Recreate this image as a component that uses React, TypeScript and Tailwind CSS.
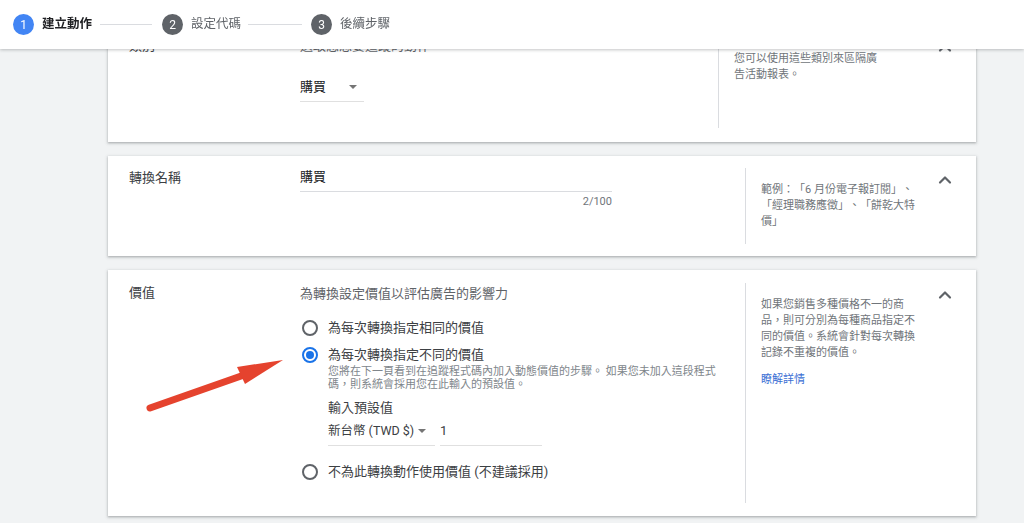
import React from "react";
import { ChevronUp } from "lucide-react";

function StepCircle({ n, active }: { n: number; active?: boolean }) {
  return (
    <div
      className={
        "flex h-[21px] w-[21px] shrink-0 items-center justify-center rounded-full text-[12px] leading-none text-white " +
        (active ? "bg-[#4285f4]" : "bg-[#5f6368]")
      }
    >
      {n}
    </div>
  );
}

function Radio({ checked }: { checked?: boolean }) {
  return (
    <div
      className={
        "flex h-4 w-4 shrink-0 items-center justify-center rounded-full border-2 " +
        (checked ? "border-[#1a73e8]" : "border-[#5f6368]")
      }
    >
      {checked && <div className="h-2 w-2 rounded-full bg-[#1a73e8]" />}
    </div>
  );
}

function Caret() {
  return (
    <svg width="8" height="4" viewBox="0 0 8 4" className="shrink-0">
      <path d="M0 0 L8 0 L4 4 Z" fill="#757575" />
    </svg>
  );
}

function Collapse() {
  return (
    <div className="ml-auto mr-[21px] mt-[2px] shrink-0">
      <ChevronUp size={20} strokeWidth={2.6} color="#5f6368" />
    </div>
  );
}

export default function App() {
  return (
    <div className="relative min-h-[523px] bg-[#f1f3f4] font-['Roboto','Noto_Sans_CJK_TC',sans-serif] text-[#202124] [text-spacing-trim:space-all]">
      {/* step header pinned over the scrolled form */}
      <header className="fixed inset-x-0 top-0 z-10 flex h-[49px] items-center bg-white pl-[13px] shadow-[0_1px_3px_rgba(60,64,67,0.3)]">
        <StepCircle n={1} active />
        <span className="ml-[8px] text-[12.5px] font-bold text-[#202124]">建立動作</span>
        <div className="ml-[8px] mr-[10px] h-px w-[52px] bg-[#dadce0]" />
        <StepCircle n={2} />
        <span className="ml-[8px] text-[12.5px] text-[#5f6368]">設定代碼</span>
        <div className="ml-[7px] mr-[9px] h-px w-[54px] bg-[#dadce0]" />
        <StepCircle n={3} />
        <span className="ml-[8px] text-[12.5px] text-[#5f6368]">後續步驟</span>
      </header>

      <main className="ml-[108px] flex w-[868px] flex-col gap-[14px] pt-[24px] pb-[20px]">
        {/* category */}
        <section className="flex bg-white shadow-[0_1px_2px_rgba(60,64,67,0.3),0_1px_3px_1px_rgba(60,64,67,0.12)]">
          <div className="w-[192px] shrink-0 pl-[21px] pt-[12px] text-[13px] leading-[20px] text-[#3c4043]">類別</div>
          <div className="w-[418px] shrink-0 pt-[12px] pb-[40px]">
            <div className="text-[13px] leading-[20px] text-[#5f6368]">選取您想要追蹤的動作</div>
            <div className="mt-[21px] flex w-[64px] items-center justify-between border-b border-[#e0e0e0] pb-[4px] pr-[7px]">
              <span className="text-[13px] leading-[20px]">購買</span>
              <Caret />
            </div>
          </div>
          <div className="mt-[12px] mb-[14px] flex flex-1 border-l border-[#dadce0] pl-[15px]">
            <div className="w-[150px] pt-[15px] text-[11px] leading-[16px] whitespace-nowrap text-[#70757a]">
              您可以使用這些類別來區隔廣
              <br />
              告活動報表。
            </div>
            <Collapse />
          </div>
        </section>

        {/* conversion name */}
        <section className="flex bg-white shadow-[0_1px_2px_rgba(60,64,67,0.3),0_1px_3px_1px_rgba(60,64,67,0.12)]">
          <div className="w-[192px] shrink-0 pl-[21px] pt-[12px] text-[13px] leading-[20px] text-[#3c4043]">轉換名稱</div>
          <div className="w-[445px] shrink-0 pt-[11px]">
            <div className="w-[312px] border-b border-[#dadce0] pb-[4px] text-[13px] leading-[20px]">購買</div>
            <div className="mt-[3px] w-[312px] text-right text-[11px] leading-[14px] text-[#70757a]">2/100</div>
          </div>
          <div className="my-[12px] flex flex-1 border-l border-[#dadce0] pl-[15px]">
            <div className="w-[150px] pt-[14px] pb-[14px] text-[11px] leading-[16px] whitespace-nowrap text-[#70757a]">
              範例：「6 月份電子報訂閱」、
              <br />
              「經理職務應徵」、「餅乾大特
              <br />
              價」
            </div>
            <Collapse />
          </div>
        </section>

        {/* value */}
        <section className="flex bg-white shadow-[0_1px_2px_rgba(60,64,67,0.3),0_1px_3px_1px_rgba(60,64,67,0.12)]">
          <div className="w-[192px] shrink-0 pl-[21px] pt-[13px] text-[13px] leading-[20px] text-[#3c4043]">價值</div>
          <div className="w-[445px] shrink-0 pt-[14px] pb-[34px]">
            <div className="text-[13px] leading-[20px] text-[#5f6368]">為轉換設定價值以評估廣告的影響力</div>

            <div className="mt-[14px] flex items-center gap-[10px] pl-[2px]">
              <Radio />
              <span className="text-[13px] leading-[20px] text-[#3c4043]">為每次轉換指定相同的價值</span>
            </div>

            <div className="mt-[7px] flex items-center gap-[10px] pl-[2px]">
              <Radio checked />
              <span className="text-[13px] leading-[20px] text-[#3c4043]">為每次轉換指定不同的價值</span>
            </div>
            <div className="pl-[28px]">
              <div className="text-[11px] leading-[13px] whitespace-nowrap text-[#80868b]">
                您將在下一頁看到在追蹤程式碼內加入動態價值的步驟。 如果您未加入這段程式
                <br />
                碼，則系統會採用您在此輸入的預設值。
              </div>
              <div className="mt-[7px] text-[13px] leading-[20px] text-[#3c4043]">輸入預設值</div>
              <div className="mt-[3px] flex items-end gap-[5px]">
                <div className="flex w-[107px] items-center justify-between border-b border-[#e0e0e0] pb-[4px] pr-[9px]">
                  <span className="text-[12.5px] leading-[20px] text-[#3c4043]">新台幣 (TWD $)</span>
                  <Caret />
                </div>
                <div className="w-[102px] border-b border-[#e0e0e0] pb-[4px] text-[13px] leading-[20px] text-[#3c4043]">1</div>
              </div>
            </div>

            <div className="mt-[16px] flex items-center gap-[10px] pl-[2px]">
              <Radio />
              <span className="text-[13px] leading-[20px] text-[#3c4043]">不為此轉換動作使用價值 (不建議採用)</span>
            </div>
          </div>
          <div className="my-[13px] flex flex-1 border-l border-[#dadce0] pl-[15px]">
            <div className="w-[150px] pt-[14px] text-[11px] leading-[16px] whitespace-nowrap text-[#70757a]">
              如果您銷售多種價格不一的商
              <br />
              品，則可分別為每種商品指定不
              <br />
              同的價值。系統會針對每次轉換
              <br />
              記錄不重複的價值。
              <div className="mt-[11px] text-[#3b6fd4]">瞭解詳情</div>
            </div>
            <Collapse />
          </div>
        </section>
      </main>

      {/* red pointer arrow drawn on top of the value card */}
      <svg
        className="pointer-events-none absolute left-[140px] top-[350px]"
        width="150"
        height="70"
        viewBox="0 0 150 70"
      >
        <line x1="10" y1="58" x2="104" y2="25" stroke="#e5432e" strokeWidth="7" strokeLinecap="round" />
        <polygon points="143,10 97,17 105,34" fill="#e5432e" />
      </svg>
    </div>
  );
}
